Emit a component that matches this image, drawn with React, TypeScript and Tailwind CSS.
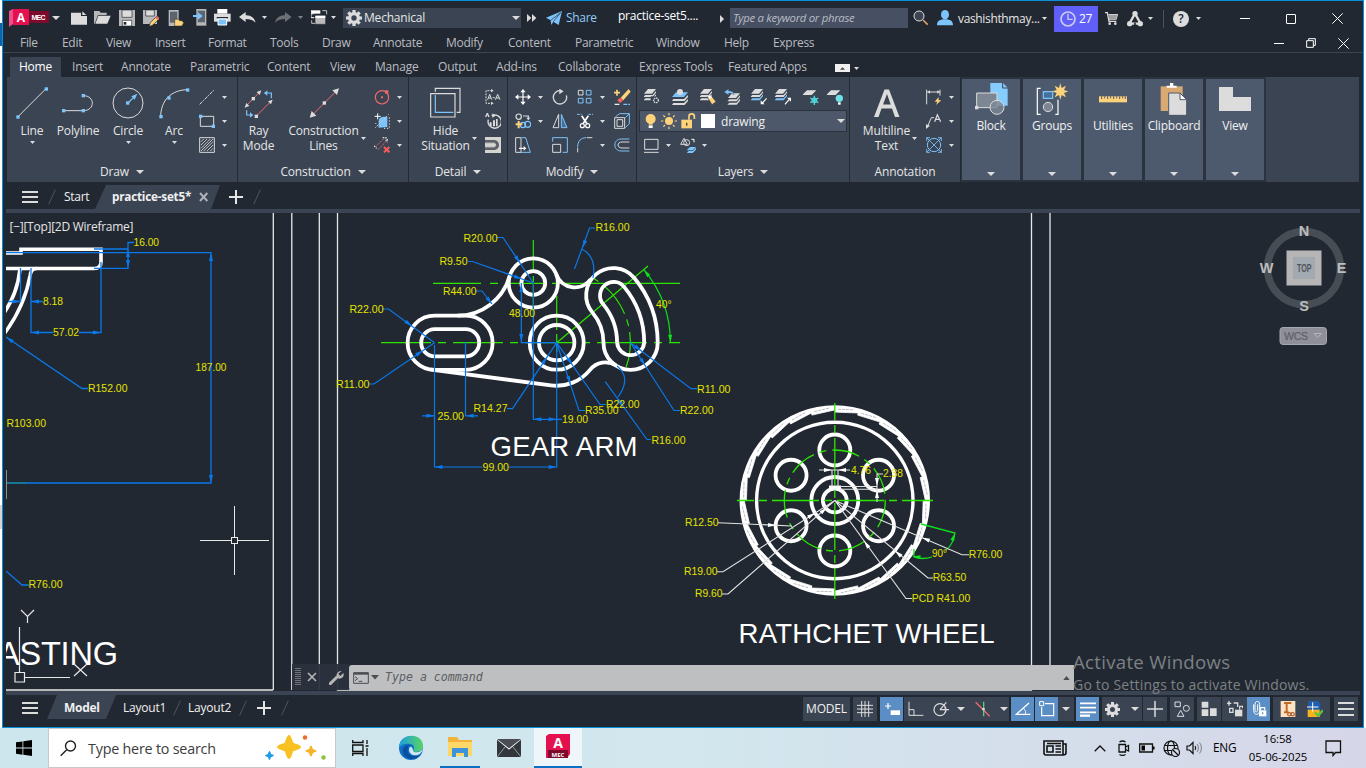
import React from "react";

type Kids = { children?: React.ReactNode };

const BLUE = "#7cc4fb";
const RED = "#ef6a6a";
const GOLD = "#fdd27a";

/* Icons are drawn on a grid of three units per pixel. */
function Ic({ w = 16, h, children, className = "" }: { w?: number; h?: number; className?: string } & Kids) {
  const hh = h ?? w;
  return (
    <svg width={w} height={hh} viewBox={`0 0 ${w * 3} ${hh * 3}`} fill="none" stroke="#dcdcdc" strokeWidth="3.6" className={"shrink-0 " + className}>
      {children}
    </svg>
  );
}

function Caret({ big = false, className = "" }: { big?: boolean; className?: string }) {
  return (
    <svg width={big ? 8 : 5} height={big ? 4 : 3} viewBox="0 0 10 5" preserveAspectRatio="none" fill="#dcdcdc" className={"shrink-0 " + className}>
      <path d="M0 0h10L5 5z" />
    </svg>
  );
}

function Cell({ className, children }: { className: string } & Kids) {
  return <div className={"flex h-full shrink-0 items-center whitespace-nowrap " + className}>{children}</div>;
}

const Gear = ({ s = 16, c = "#dcdcdc" }: { s?: number; c?: string }) => (
  <svg width={s} height={s} viewBox="-12 -12 24 24" className="shrink-0">
    <circle r="6.5" fill="none" stroke={c} strokeWidth="5" />
    {[0, 45, 90, 135, 180, 225, 270, 315].map((a) => (
      <rect key={a} x="-2.4" y="-12" width="4.8" height="5" fill={c} transform={`rotate(${a})`} />
    ))}
  </svg>
);

function TitleBar() {
  return (
    <div className="flex h-[33px] items-center">
      <Cell className="w-[47px] pl-[6px] pt-[3px]">
        <svg width="41" height="20" viewBox="0 0 41 20">
          <path d="M0 2L4 0V15L0 18z" fill="#f0508a" />
          <path d="M4 0H20V16H4z" fill="#e51050" />
          <path d="M20 2H40V14H20z" fill="#7d0a2b" />
          <text x="12" y="12.5" fontSize="12" fontWeight="700" fill="#fff" textAnchor="middle" fontFamily="Open Sans">A</text>
          <text x="22.5" y="11" fontSize="7" fontWeight="700" fill="#fff" textLength="14" fontFamily="Liberation Sans">MEC</text>
        </svg>
      </Cell>
      <Cell className="w-[21px] pl-[2px]"><Caret big /></Cell>
      <Cell className="w-[23px]"><Ic><path d="M0 8H30V18H48V44H0z" fill="#dcdcdc" stroke="none" /><path d="M34 4L46 15H34z" fill="#dcdcdc" stroke="none" /></Ic></Cell>
      <Cell className="w-[25px]"><Ic w={17}><path d="M0 6H16L20 11H38V18H12L2 44H0z" fill="#b9b9b9" stroke="none" /><path d="M13 20H50L40 44H4z" fill="#dcdcdc" stroke="none" /></Ic></Cell>
      <Cell className="w-[24px]"><Ic><path d="M0 0H48V48H0z" fill="#b9b9b9" stroke="none" /><path d="M9 0H39V22H9z" fill="#dcdcdc" stroke="#222831" strokeWidth="2" /><path d="M10 31H38V48H10z" fill="#fff" stroke="#222831" strokeWidth="2" /><path d="M14 36H22V44H14z" fill="#222831" stroke="none" /></Ic></Cell>
      <Cell className="w-[25px]"><Ic><path d="M0 0H42V42H0z" fill="#b9b9b9" stroke="none" /><path d="M8 0H34V18H8z" fill="#dcdcdc" stroke="#222831" strokeWidth="2" /><path d="M18 50L22 38L42 18L50 26L28 46z" fill={GOLD} stroke="#222831" strokeWidth="2" /><path d="M37 23L42 18L50 25L44 30z" fill={RED} stroke="none" /></Ic></Cell>
      <Cell className="w-[25px]"><Ic><path d="M2 0H32V48H2z" fill="#b9b9b9" stroke="none" /><path d="M6 5H28V38H6z" fill="#5c6470" stroke="none" /><path d="M20 28H32L35 32H44V36H48L42 48H20z" fill={GOLD} stroke="#222831" strokeWidth="1.5" /></Ic></Cell>
      <Cell className="w-[21px]"><Ic w={14} h={17}><path d="M10 0H40V50H10z" fill="#b9b9b9" stroke="none" /><path d="M14 5H36V40H14z" fill="#5c6470" stroke="none" /><path d="M0 18H14V9L29 21L14 33V24H0z" fill={BLUE} stroke="none" /></Ic></Cell>
      <Cell className="w-[25px]"><Ic w={17}><path d="M10 0H40V14H10z" fill="#fff" stroke="none" /><path d="M0 14H50V38H0z" fill="#dcdcdc" stroke="none" /><path d="M8 24H42V28H8z" fill="#222831" stroke="none" /><path d="M12 30H38V48H12z" fill={BLUE} stroke="#fff" strokeWidth="3" /></Ic></Cell>
      <Cell className="w-[23px]"><Ic w={17} h={12}><path d="M0 15L20 0V10C36 9 46 18 50 32C40 23 32 21 20 21V30z" fill="#dcdcdc" stroke="none" /></Ic></Cell>
      <Cell className="w-[13px]"><Caret /></Cell>
      <Cell className="w-[23px]"><Ic w={17} h={12} className="opacity-40"><path d="M50 15L30 0V10C14 9 4 18 0 32C10 23 18 21 30 21V30z" fill="#dcdcdc" stroke="none" /></Ic></Cell>
      <Cell className="w-[13px]"><Caret className="opacity-50" /></Cell>
      <Cell className="w-[20px]"><Ic w={17}><path d="M0 4H28V14H0z" fill="#fff" stroke="none" /><path d="M0 14H10M0 4V26H10" /><path d="M12 20H44V46H12z" fill="#b9b9b9" stroke="#222831" strokeWidth="2" /><path d="M13 20H43V27H13z" fill="#fff" stroke="none" /><path d="M34 5H47V16M2 34V43H12" strokeWidth="2.5" /></Ic></Cell>
      <Cell className="w-[12px]"><Caret /></Cell>
      <div className="mt-[1px] flex h-[20px] w-[178px] shrink-0 items-center bg-[#3b4453] pl-[3px] pr-[1px] text-[12px] text-[#e6e6e6]">
        <Gear />
        <span className="ml-[2px] flex-1 text-[12px] tracking-[-0.2px]">Mechanical</span>
        <Caret big />
      </div>
      <Cell className="w-[25px] pl-[6px]"><Ic w={10} h={8}><path d="M0 0L13 12L0 24zM15 0L28 12L15 24z" fill="#dcdcdc" stroke="none" /></Ic></Cell>
      <Cell className="w-[20px]"><Ic w={16} h={14}><path d="M0 20L48 0L38 42L22 32L16 42L14 28z" fill={BLUE} stroke="none" /><path d="M14 28L44 5L22 32" stroke="#222831" strokeWidth="2" /></Ic></Cell>
      <Cell className="w-[52px] pt-[1px] text-[12px] tracking-[-0.3px] text-[#8fcdfa]">Share</Cell>
      <Cell className="w-[102px] pb-[3px] text-[12px] tracking-[-0.25px] text-white">practice-set5....</Cell>
      <Cell className="w-[10px] pt-[2px]"><Ic w={4} h={8}><path d="M0 0L12 12L0 24z" fill="#dcdcdc" stroke="none" /></Ic></Cell>
      <div className="mt-[1px] flex h-[20px] w-[178px] shrink-0 items-center bg-[#474f63] pl-[3px] text-[11.3px] italic tracking-[-0.28px] text-[#b8bcc4]">Type a keyword or phrase</div>
      <Cell className="w-[28px] pl-[5px]"><Ic><circle cx="18" cy="18" r="15" fill="#3b4453" strokeWidth="3" /><path d="M30 30L44 44" stroke="#d9a066" strokeWidth="5" /></Ic></Cell>
      <Cell className="w-[22px] pl-[1px]"><Ic><ellipse cx="24" cy="14" rx="12" ry="14" fill={BLUE} stroke="none" /><path d="M0 46C0 32 8 31 18 28H30C40 31 48 32 48 46z" fill={BLUE} stroke="none" /></Ic></Cell>
      <Cell className="w-[84px] pt-[3px] text-[12px] tracking-[-0.35px] text-[#e6e6e6]">vashishthmay...</Cell>
      <Cell className="w-[12px] pt-[2px]"><Caret /></Cell>
      <div className="mt-[3px] flex h-[26px] w-[44px] shrink-0 items-center gap-[3px] bg-[#6060f8] pl-[6px] text-[12px] tracking-[-0.3px] text-white">
        <Ic><circle cx="24" cy="24" r="21" stroke="#c9c9f6" strokeWidth="5" /><path d="M24 8V25H38" stroke="#c9c9f6" strokeWidth="4" /></Ic>
        27
      </div>
      <Cell className="w-[29px] pl-[7px] pt-[3px]"><Ic w={13} h={14}><path d="M0 2H7L12 28H34M11 8H37L33 21H12" strokeWidth="4" /><path d="M11 8H37L33 21H12z" fill="#a0a0a0" stroke="none" /><circle cx="14" cy="35" r="4" fill="#dcdcdc" stroke="none" /><circle cx="31" cy="35" r="4" fill="#dcdcdc" stroke="none" /></Ic></Cell>
      <Cell className="w-[21px] pt-[2px]"><Ic><path d="M24 8L7 38H41z" strokeWidth="7" /><circle cx="24" cy="8" r="8" fill="#dcdcdc" stroke="none" /><circle cx="8" cy="38" r="8" fill="#dcdcdc" stroke="none" /><circle cx="40" cy="38" r="8" fill="#dcdcdc" stroke="none" /><path d="M24 35V48" stroke="#222831" strokeWidth="5" /></Ic></Cell>
      <Cell className="w-[15px] pt-[2px]"><Caret /></Cell>
      <div className="mr-[9px] mt-[2px] h-[18px] w-px shrink-0 bg-[#4a5260]" />
      <div className="mr-[7px] mt-[2px] flex h-[16px] w-[16px] shrink-0 items-center justify-center rounded-full bg-[#dcdcdc] text-[12px] font-semibold text-[#222831]">?</div>
      <Cell className="w-[44px] pt-[2px]"><Caret /></Cell>
      <Cell className="w-[46px] pt-[2px]"><div className="h-px w-[10px] bg-white" /></Cell>
      <Cell className="w-[46px] pt-[2px]"><div className="h-[10px] w-[10px] rounded-[1px] border border-white" /></Cell>
      <Cell className="w-[12px] pt-[2px]"><Ic w={11}><path d="M1 1L32 32M32 1L1 32" stroke="#fff" strokeWidth="3" /></Ic></Cell>
    </div>
  );
}

const MENUS: [string, string][] = [
  ["File", "w-[42px]"], ["Edit", "w-[44px]"], ["View", "w-[49px]"], ["Insert", "w-[53px]"], ["Format", "w-[62px]"], ["Tools", "w-[52px]"], ["Draw", "w-[51px]"],
  ["Annotate", "w-[73px]"], ["Modify", "w-[62px]"], ["Content", "w-[67px]"], ["Parametric", "w-[81px]"], ["Window", "w-[68px]"], ["Help", "w-[49px]"], ["Express", "w-[48px]"],
];
const TABS: [string, string][] = [
  ["Insert", "w-[49px]"], ["Annotate", "w-[69px]"], ["Parametric", "w-[77px]"], ["Content", "w-[63px]"], ["View", "w-[45px]"], ["Manage", "w-[63px]"], ["Output", "w-[58px]"],
  ["Add-ins", "w-[62px]"], ["Collaborate", "w-[81px]"], ["Express Tools", "w-[89px]"], ["Featured Apps", "w-[107px]"],
];

function Menus() {
  return (
    <>
      <div className="flex h-[18px] items-center pl-[17px] text-[12px] tracking-[-0.3px] text-[#b9bcc2]">
        {MENUS.map(([t, w]) => <Cell key={t} className={w}>{t}</Cell>)}
        <div className="flex-1" />
        <Cell className="w-[32px]"><div className="h-px w-[10px] bg-white" /></Cell>
        <Cell className="w-[32px]"><Ic w={10}><path d="M2 8H22V28H2zM8 7V2H28V22H23" stroke="#fff" strokeWidth="3" /></Ic></Cell>
        <Cell className="w-[25px]"><Ic w={11}><path d="M1 1L32 32M32 1L1 32" stroke="#fff" strokeWidth="3" /></Ic></Cell>
      </div>
      <div className="h-px bg-[#3b4453]" />
      <div className="flex h-[24px] items-end pl-[7px] text-[12px] tracking-[-0.2px] text-[#b9bcc2]">
        <div className="flex h-[20px] w-[51px] items-center justify-center bg-[#3b4453] text-white">Home</div>
        <div className="flex h-[20px] items-center pl-[11px]">
          {TABS.map(([t, w]) => <Cell key={t} className={w}>{t}</Cell>)}
          <div className="mt-[2px] flex h-[8px] w-[15px] items-center justify-center bg-[#f0f0f0]"><svg width="5" height="3" viewBox="0 0 10 5"><path d="M0 5L5 0L10 5z" fill="#444" /></svg></div>
          <Caret className="ml-[4px] mt-[2px]" />
        </div>
      </div>
    </>
  );
}

function Panel({ w, title, caret = true, children }: { w: string; title: string; caret?: boolean } & Kids) {
  return (
    <div className={"flex h-[105px] shrink-0 flex-col border-r border-[#232a34] " + w}>
      <div className="flex h-[84px]">{children}</div>
      <div className="flex h-[21px] items-center justify-center gap-[7px] text-[12px] tracking-[-0.15px] text-[#e6e6e6]">
        {title}{caret && <Caret big />}
      </div>
    </div>
  );
}

function Big({ w, label, caret = false, side = false, children }: { w: string; label: string[]; caret?: boolean; side?: boolean } & Kids) {
  return (
    <div className={"flex shrink-0 flex-col items-center pt-[10px] text-[12px] leading-[15px] tracking-[-0.15px] text-[#e6e6e6] " + w}>
      <div className="flex h-[36px] items-start">{children}</div>
      <div className="relative whitespace-nowrap text-center">
        {label.map((l) => <div key={l}>{l}</div>)}
        {side && <Caret className="absolute -right-[7px] top-[14px]" />}
      </div>
      {caret && <Caret className="mt-[3px]" />}
    </div>
  );
}

function Small({ caret = false, gap = "w-[8px]", children }: { caret?: boolean; gap?: string } & Kids) {
  return <div className="flex h-[24px] items-center">{children}{caret && <><span className={gap} /><Caret /></>}</div>;
}

const Dot = ({ x, y, c = BLUE }: { x: number; y: number; c?: string }) => <rect x={x - 5} y={y - 5} width="10" height="10" fill={c} stroke="none" />;
const Layers3 = ({ b = "#dcdcdc" }: { b?: string }) => (
  <>
    <path d="M12 0H36L24 14H0z" fill="#dcdcdc" stroke="none" />
    <path d="M4 18H26L36 6V11L26 24H-2z" fill="#dcdcdc" stroke="none" />
    <path d="M4 28H26L36 16V22L26 34H-2z" fill={b} stroke="none" />
  </>
);

function Ribbon() {
  return (
    <div className="ml-[4px] mr-[4px] flex h-[105px] bg-[#3b4453]">
      <Panel w="w-[231px]" title="Draw">
        <div className="w-[2px]" />
        <Big w="w-[46px]" label={["Line"]} caret><Ic w={32}><path d="M4 91L91 4" strokeWidth="3" /><Dot x={6} y={90} /><Dot x={91} y={6} /></Ic></Big>
        <Big w="w-[46px]" label={["Polyline"]}><Ic w={32}><path d="M4 71H64M64 26C100 26 100 71 64 71" strokeWidth="3" /><Dot x={5} y={71} /><Dot x={64} y={71} /><Dot x={64} y={26} /></Ic></Big>
        <Big w="w-[54px]" label={["Circle"]} caret><Ic w={32}><circle cx="48" cy="48" r="45" strokeWidth="3" /><path d="M48 48L68 28" stroke={BLUE} /><path d="M76 20L58 28L68 38z" fill={BLUE} stroke="none" /><Dot x={47} y={48} /></Ic></Big>
        <Big w="w-[38px]" label={["Arc"]} caret><Ic w={32}><path d="M8 90C8 40 40 8 90 8" strokeWidth="3" /><Dot x={9} y={89} /><Dot x={33} y={33} /><Dot x={89} y={9} /></Ic></Big>
        <div className="pl-[6px] pt-[8px]">
          <Small caret gap="w-[7px]"><Ic><path d="M2 46L46 2" strokeDasharray="12 3 3 3" strokeWidth="3" /></Ic></Small>
          <Small caret gap="w-[7px]"><Ic><path d="M4 10H44V40H4z" strokeWidth="3" /><Dot x={5} y={10} /><Dot x={43} y={40} /></Ic></Small>
          <Small caret gap="w-[7px]"><Ic><path d="M2 2H46V46H2z" strokeWidth="3" /><path d="M6 14L14 6M6 24L24 6M6 34L34 6M6 42L42 6M14 42L42 14M24 42L42 24M34 42L42 34" strokeWidth="2.6" /></Ic></Small>
        </div>
      </Panel>
      <Panel w="w-[171px]" title="Construction">
        <Big w="w-[41px]" label={["Ray", "Mode"]}><Ic w={30} h={32}><path d="M8 55L44 18M40 84L78 46" stroke={RED} strokeWidth="3" /><path d="M52 10L38 15L47 24zM2 62L16 57L7 48zM86 38L72 43L81 52z" fill="#dcdcdc" stroke="none" /><Dot x={28} y={35} c="#dcdcdc" /><Dot x={37} y={88} c="#dcdcdc" /><path d="M82 34V18H62M8 70V84H24" stroke={BLUE} /><path d="M60 18L70 10V26zM28 84L18 76V92z" fill={BLUE} stroke="none" /></Ic></Big>
        <Big w="w-[89px]" label={["Construction", "Lines"]} side><Ic w={30} h={32}><path d="M10 84L82 12" stroke={RED} strokeWidth="3" /><path d="M90 4L70 10L84 24zM2 92L8 72L22 86z" fill="#dcdcdc" stroke="none" /><Dot x={46} y={48} c="#dcdcdc" /></Ic></Big>
        <div className="pl-[6px] pt-[8px]">
          <Small caret gap="w-[7px]"><Ic><circle cx="24" cy="25" r="20" stroke={RED} /><Dot x={38} y={9} c={RED} /><rect x="21" y="22" width="6" height="6" fill={RED} stroke="none" /></Ic></Small>
          <Small caret gap="w-[7px]"><Ic><path d="M14 44V24C14 14 24 10 40 12V42z" fill={BLUE} stroke="none" /><path d="M2 10H20M11 1V19" stroke="#fff" strokeWidth="3" /><path d="M4 44L44 4M4 30L16 44M30 46H46V10" strokeDasharray="4 5" strokeWidth="3" /></Ic></Small>
          <Small caret gap="w-[7px]"><Ic><path d="M4 30L30 4M12 38L40 10" stroke={RED} strokeWidth="3" strokeDasharray="6 4" /><path d="M0 26L8 34M26 2H36V12M40 6V16" strokeDasharray="5 3" /><path d="M30 30L46 46M46 30L30 46" stroke="#ff5a5a" strokeWidth="6" /></Ic></Small>
        </div>
      </Panel>
      <Panel w="w-[99px]" title="Detail">
        <Big w="w-[73px]" label={["Hide", "Situation"]} side><Ic w={31} h={32}><path d="M2 20H75V90H2zM16 14V4H90V76H80" strokeWidth="3.5" /><path d="M16 24V76H70" stroke={BLUE} /></Ic></Big>
        <div className="pl-[3px] pt-[8px]">
          <Small><Ic><path d="M22 5H3V43H22" strokeDasharray="6 3" strokeWidth="3" /><path d="M18 0L26 5L18 10zM18 38L26 43L18 48z" fill="#dcdcdc" stroke="none" /><path d="M8 32L14 16L20 32M10 27H18M23 26H29M31 32L38 16L45 32M33 27H43" strokeWidth="3" /></Ic></Small>
          <Small><Ic><path d="M2 12L7 1L12 12M20 8A20 20 0 1 1 10 20" strokeWidth="4" /><path d="M22 1V14L32 8z" fill="#dcdcdc" stroke="none" /><path d="M14 28H20V40H14zM24 22H30V40H24zM33 18H38V40H33z" fill="#dcdcdc" stroke="none" /></Ic></Small>
          <Small><Ic><path d="M0 0H48V48H0z" fill="#d5d5d0" stroke="none" /><path d="M0 14H28C40 14 40 34 28 34H0" stroke="#5b5f66" strokeWidth="10" /><path d="M0 18H26C34 18 34 30 26 30H0" stroke="#e5e5e0" strokeWidth="2" /></Ic></Small>
        </div>
      </Panel>
      <Panel w="w-[129px]" title="Modify">
        <div className="flex pl-[7px] pt-[8px]">
          <div className="w-[37px]">
            <Small caret gap="w-[7px]"><Ic><path d="M24 6V42M6 24H42" stroke="#fff" /><path d="M24 0L32 10H16zM24 48L32 38H16zM0 24L10 16V32zM48 24L38 16V32z" fill="#fff" stroke="none" /></Ic></Small>
            <Small caret gap="w-[7px]"><Ic><circle cx="11" cy="11" r="8" /><path d="M24 9H40V18" /><path d="M34 14H46L40 22z" fill="#dcdcdc" stroke="none" /><circle cx="24" cy="36" r="8" stroke={BLUE} /><circle cx="38" cy="34" r="9" stroke={BLUE} /><path d="M11 24V46M2 34H22" stroke={GOLD} strokeWidth="6" /></Ic></Small>
            <Small><Ic><path d="M2 2H18V46H2z" strokeWidth="3" /><path d="M20 2H32L46 46H18" stroke={BLUE} strokeWidth="3" /><path d="M12 34H30" stroke="#fff" /><path d="M26 27L34 34L26 41z" fill="#fff" stroke="none" /></Ic></Small>
          </div>
          <div className="w-[25px]">
            <Small><Ic><path d="M24 5A20 20 0 1 0 43 19" strokeWidth="4" /><path d="M22 -1L35 7L22 16z" fill="#dcdcdc" stroke="none" /></Ic></Small>
            <Small><Ic><path d="M20 4V44H3z" strokeWidth="3" /><path d="M28 4V44H45z" stroke={BLUE} strokeWidth="3" fill="#44709a" /></Ic></Small>
            <Small><Ic><path d="M2 14V2H46V46H32" stroke={BLUE} strokeWidth="3" /><path d="M2 22H26V46H2z" strokeWidth="3" /></Ic></Small>
          </div>
          <div className="w-[37px]">
            <Small caret gap="w-[7px]"><Ic><path d="M4 4H18V18H4z" strokeWidth="3" /><path d="M28 4H42V18H28zM4 28H18V42H4zM28 28H42V42H28z" stroke={BLUE} strokeWidth="3" /></Ic></Small>
            <Small caret gap="w-[7px]"><Ic><path d="M0 4H14M34 4H48" strokeWidth="3" stroke={BLUE} strokeDasharray="8 3" /><path d="M14 8L30 32M34 8L18 32" stroke="#fff" strokeWidth="5" /><circle cx="16" cy="38" r="6" stroke="#fff" /><circle cx="32" cy="38" r="6" stroke="#fff" /></Ic></Small>
            <Small caret gap="w-[7px]"><Ic><path d="M2 46V32M30 2H46" strokeWidth="3" /><path d="M2 30C2 12 12 2 28 2" stroke={BLUE} strokeWidth="3" /></Ic></Small>
          </div>
          <div>
            <Small><Ic w={17}><path d="M20 26L44 0L50 8L28 34z" fill={GOLD} stroke="none" /><path d="M10 34L18 26L28 34L18 42z" fill="#ff6262" stroke="none" /><path d="M9 2V20M0 11H18" stroke={GOLD} strokeWidth="5" /><path d="M2 46H16" stroke="#fff" /><path d="M28 46H48" stroke={BLUE} strokeDasharray="12 3" /></Ic></Small>
            <Small><Ic><path d="M2 14H32V46H2zM9 20H26V40H9z" strokeWidth="3" /><path d="M4 12L16 2H46V32L34 44M34 14L46 2" stroke={BLUE} strokeWidth="3" /></Ic></Small>
            <Small><Ic><path d="M46 6H22C-4 6 -4 42 22 42H46" stroke={BLUE} strokeWidth="3" /><path d="M46 15H24C8 15 8 33 24 33H46" strokeWidth="3" /></Ic></Small>
          </div>
        </div>
      </Panel>
      <Panel w="w-[213px]" title="Layers">
        <div className="pl-[2px] pt-[8px]">
          <div className="flex h-[24px] items-center pl-[5px]">
            <Cell className="w-[28px]"><Ic><Layers3 /><rect x="20" y="22" width="28" height="26" fill="#3b4453" stroke="none" /><circle cx="36" cy="34" r="7" strokeWidth="4" strokeDasharray="4 2" /></Ic></Cell>
            <Cell className="w-[28px]"><Ic><path d="M12 10H48L36 24H0z" fill={BLUE} stroke="none" /><circle cx="24" cy="9" r="9" fill="#dcdcdc" stroke="none" /><path d="M4 30H36L48 18V24L38 36H0zM4 42H36L48 30V36L38 48H0z" fill="#dcdcdc" stroke="none" /></Ic></Cell>
            <Cell className="w-[24px]"><Ic><Layers3 /><path d="M22 24L32 18L48 38L36 47z" fill={GOLD} stroke="#3b4453" strokeWidth="2" /><path d="M24 22L30 18L36 25L29 30z" fill="#fff" stroke="none" /></Ic></Cell>
            <Cell className="w-[27px]"><Ic w={17}><g transform="translate(12 13)"><Layers3 /></g><path d="M0 9L14 0V6C26 6 30 10 30 18C24 13 22 13 14 13V18z" fill={BLUE} stroke="#3b4453" strokeWidth="1" /></Ic></Cell>
            <Cell className="w-[24px]"><Ic><Layers3 b={BLUE} /><path d="M47 28L34 42" stroke="#fff" /><path d="M29 46V34L41 46z" fill="#fff" stroke="none" /></Ic></Cell>
            <Cell className="w-[28px]"><Ic><Layers3 b={BLUE} /><path d="M30 46L42 32" stroke="#fff" /><path d="M48 26V38L36 26z" fill="#fff" stroke="none" /></Ic></Cell>
            <Cell className="w-[24px]"><Ic><path d="M12 4H40L26 18H-2z" fill="#dcdcdc" stroke="none" /><path d="M34 20V48M22 27L46 41M22 41L46 27" stroke="#4fd4dc" strokeWidth="4" /><circle cx="34" cy="34" r="7" stroke="#4fd4dc" /></Ic></Cell>
            <Cell className="w-[16px]"><Ic><path d="M12 4H40L26 18H-2z" fill="#dcdcdc" stroke="none" /><circle cx="37" cy="28" r="11" fill="#6fe0e6" stroke="none" /><path d="M33 40H41V47H33z" fill="#fff" stroke="none" /></Ic></Cell>
          </div>
          <div className="my-[1px] flex h-[22px] w-[208px] items-center border border-[#2b323d] bg-[#4d586b] pl-[5px] pr-[1px] text-[12px] text-[#f0f0f0]">
            <Ic w={12} h={15}><circle cx="17" cy="15" r="15" fill={GOLD} stroke="none" /><path d="M11 27H23V32H11z" fill={GOLD} stroke="none" /><path d="M11 34H23V42H11z" fill="#fff" stroke="none" /></Ic>
            <Ic w={16} className="ml-[4px]"><circle cx="24" cy="24" r="12" fill={GOLD} stroke="none" /><path d="M24 0V7M24 41V48M0 24H7M41 24H48M7 7L12 12M36 36L41 41M41 7L36 12M12 36L7 41" stroke={GOLD} /></Ic>
            <Ic w={16} className="ml-[3px]"><path d="M4 20H36V46H4z" fill={GOLD} stroke="none" /><path d="M27 20V10C27 0 43 0 43 10V18" stroke={GOLD} strokeWidth="5" /><path d="M20 29V38" stroke="#4a4030" strokeWidth="4" /></Ic>
            <div className="ml-[5px] h-[14px] w-[14px] bg-white" />
            <span className="ml-[6px] flex-1 pt-[2px] tracking-[-0.2px]">drawing</span>
            <Caret big />
          </div>
          <div className="flex h-[24px] items-center pl-[5px]">
            <Ic w={15}><path d="M2 4H42V34H2zM0 43H44" strokeWidth="3" /></Ic><Caret className="ml-[7px]" />
            <Ic className="ml-[9px]"><path d="M12 4L2 22H22z" strokeWidth="3" /><circle cx="20" cy="17" r="9" strokeWidth="3" /><path d="M34 7H42V16" stroke="#fff" strokeWidth="3" /><path d="M30 30H48L38 40H20zM26 42H38L48 32V38L38 48H20z" fill={BLUE} stroke="none" /></Ic><Caret className="ml-[6px]" />
          </div>
        </div>
      </Panel>
      <Panel w="w-[111px]" title="Annotation" caret={false}>
        <Big w="w-[73px]" label={["Multiline", "Text"]} side><svg width="28" height="32" viewBox="0 0 28 32"><path d="M1 30L11.5 2.5H16L26.5 30H22L19 21.5H8.5L5.5 30zM10 17.5H17.7L14 7z" fill="#dcdcdc" fillRule="evenodd" /></svg></Big>
        <div className="pl-[3px] pt-[8px]">
          <Small caret gap="w-[7px]"><Ic><path d="M2 2V46M42 2V20M4 9H42" strokeWidth="3" /><path d="M4 9L12 4V14zM42 9L34 4V14z" fill="#dcdcdc" stroke="none" /><path d="M38 24L26 38H34L30 48L46 34H38z" fill={GOLD} stroke="none" /></Ic></Small>
          <Small caret gap="w-[7px]"><Ic><path d="M4 42L16 14H24" strokeWidth="3" /><path d="M0 48V34L12 38z" fill="#dcdcdc" stroke="none" /><path d="M26 26L34 5L44 26M29 19H41" /></Ic></Small>
          <Small caret gap="w-[7px]"><Ic><circle cx="24" cy="24" r="20" stroke={BLUE} strokeWidth="3" /><path d="M2 2L46 46M46 2L2 46M2 12V2H12M36 2H46V12M46 36V46H36M12 46H2V36" stroke={BLUE} strokeWidth="2.6" /></Ic></Small>
        </div>
      </Panel>
      <div className="flex bg-[#2b333f]">
        <Closed label="Block"><Ic w={33}><path d="M46 0H84L98 14V68H46z" fill="#86ccff" stroke="none" /><path d="M83 -2V15H99" stroke="#3b4453" strokeWidth="3" /><path d="M5 30H66V74H5z" fill="#7d8794" strokeWidth="3" /><circle cx="66" cy="73" r="21" fill="#7d8794" strokeWidth="3" fillOpacity=".8" /><Dot x={5} y={74} c="#dcdcdc" /></Ic></Closed>
        <Closed label="Groups"><Ic w={32}><path d="M14 16H4V94H14M58 94H66V50" stroke="#fff" /><path d="M22 26H50V46H22z" fill="#44709a" stroke={BLUE} /><circle cx="36" cy="72" r="14" fill="#7d8794" strokeWidth="3" /><path d="M73 0L77 15L90 8L84 21L98 25L84 30L90 43L77 36L73 50L69 36L56 43L62 30L48 25L62 21L56 8L69 15z" fill={GOLD} stroke="none" /></Ic></Closed>
        <Closed label="Utilities"><Ic w={32}><path d="M6 40H90V58H6z" fill={GOLD} stroke="none" /><path d="M14 40V48M23 40V46M32 40V48M41 40V46M50 40V48M59 40V46M68 40V48M77 40V46M85 40V48" stroke="#4d5a6e" strokeWidth="3" /></Ic></Closed>
        <Closed label="Clipboard"><Ic w={32}><path d="M8 10H74V84H8z" fill="#d9a972" stroke="none" /><path d="M26 14V8H36V0H46V8H56V14z" fill="#fff" stroke="none" /><path d="M32 30H66L86 50V97H32z" fill="#dcdcdc" stroke="#4d5a6e" strokeWidth="3" /><path d="M66 30V50H86z" fill="#fff" stroke="#4d5a6e" strokeWidth="3" /></Ic></Closed>
        <Closed label="View"><Ic w={32}><path d="M0 12H42V42H96V84H0z" fill="#dcdcdc" stroke="none" /></Ic></Closed>
      </div>
    </div>
  );
}

function Closed({ label, children }: { label: string } & Kids) {
  return (
    <div className="ml-[1px] mr-[2px] my-[2px] flex w-[58px] flex-col items-center bg-[#4d5a6e] pt-[4px] text-[12px] leading-[15px] tracking-[-0.2px] text-[#f0f0f0]">
      <div className="h-[35px]">{children}</div>
      <div>{label}</div>
      <Caret big className="mb-[4px] mt-auto" />
    </div>
  );
}

const Slash = () => <Ic w={8} h={16}><path d="M22 2L2 46" stroke="#4c5563" strokeWidth="3" /></Ic>;
const Burger = ({ className = "" }: { className?: string }) => (
  <div className={"flex h-[12px] w-[16px] flex-col justify-between " + className}><i className="h-[2px] bg-[#dcdcdc]" /><i className="h-[2px] bg-[#dcdcdc]" /><i className="h-[2px] bg-[#dcdcdc]" /></div>
);
const Plus = () => <Ic w={14}><path d="M21 0V42M0 21H42" stroke="#e6e6e6" strokeWidth="6" /></Ic>;

function FileTabs() {
  return (
    <>
      <div className="flex h-[27px] items-center pt-[3px] text-[12px] tracking-[-0.15px] text-[#f0f0f0]">
        <Cell className="w-[45px] pl-[19px]"><Burger /></Cell>
        <Cell className="w-[16px]"><Slash /></Cell>
        <Cell className="w-[31px] tracking-[-0.3px]">Start</Cell>
        <div className="flex h-full w-[125px] items-center bg-[#3b4453] pl-[17px] [clip-path:polygon(11px_0,100%_0,calc(100%-9px)_100%,0_100%)]">
          <b className="w-[87px] text-[11.7px] font-bold tracking-[-0.2px]">practice-set5*</b>
          <Ic w={10}><path d="M3 3L25 27M25 3L3 27" stroke="#aeb2b8" strokeWidth="6" /></Ic>
        </div>
        <Cell className="w-[33px] pl-[9px]"><Plus /></Cell>
        <Slash />
      </div>
      <div className="ml-[3px] mr-[3px] h-[4px] bg-[#3b4453]" />
    </>
  );
}

/* ---------- drawing area ---------- */
const DIM = "#0a78ea";
const GREEN = "#2ae600";

function Arr({ x, y, a, c = DIM }: { x: number; y: number; a: number; c?: string }) {
  return <path d="M0 0L-8 -2V2z" fill={c} stroke="none" transform={`translate(${x} ${y}) rotate(${a})`} />;
}
const LABELS: [string, number, number, number][] = [
  ["16.00", 133.5, 246.5, 25.5], ["8.18", 43, 305.5, 20], ["57.02", 53, 336.5, 26], ["187.00", 195.5, 371.5, 31], ["R152.00", 88, 392.5, 39.5], ["R103.00", 6.5, 427.5, 39.5], ["R76.00", 28.5, 588.5, 34],
  ["R20.00", 463.5, 242, 34], ["R9.50", 439.5, 265.5, 28], ["R44.00", 443, 295, 33.5], ["R22.00", 349.5, 313, 34], ["R11.00", 336, 388, 33.5], ["48.00", 509, 317, 26], ["25.00", 437.5, 420, 26.5],
  ["99.00", 482.5, 471, 26.5], ["19.00", 562, 423.3, 26], ["R14.27", 473.5, 412.7, 34], ["R35.00", 585, 414.7, 33.5], ["R22.00", 606, 408.7, 33.5], ["R16.00", 651.5, 444, 34], ["R22.00", 680, 414.7, 33.5],
  ["R11.00", 697, 392.8, 33.5], ["R16.00", 595.5, 231.7, 34], ["40°", 656, 308, 15.5], ["R12.50", 685, 526.7, 33.5], ["R19.00", 684, 575.7, 33.5], ["R9.60", 695, 597.7, 27.5], ["R76.00", 968.7, 558.7, 33.5],
  ["R63.50", 932.7, 581.7, 33.5], ["PCD R41.00", 911.7, 602.7, 58.5], ["4.76", 851, 474, 20], ["2.38", 883, 477.7, 20], ["90°", 932, 557.7, 15],
];
const CX = 834.8;
const CY = 500.5;
const polar = (r: number, deg: number) => `${CX + r * Math.sin((deg * Math.PI) / 180)} ${CY - r * Math.cos((deg * Math.PI) / 180)}`;

function Drawing() {
  return (
    <svg width="1357" height="478" viewBox="6 213 1357 478" className="block" fill="none" fontFamily="Liberation Sans, sans-serif">
      <g stroke="#e8e8e8" strokeWidth="1.3">
        <path d="M273.3 213V690M291.8 213V690M319.3 213V690M337.5 213V690H1031.5V213M1050 213V690" />
        <path d="M6 690H273" />
      </g>

      {/* casting */}
      <g stroke="#fff" strokeWidth="3.6">
        <path d="M6 253H21V249.3H101V262Q101 268.5 94 268.5H6" />
        <path d="M20 269C18 287 13 299 4 313M37 268.5Q31 268 30 276C26 298 16 318 4 334" />
      </g>
      <g stroke={DIM} strokeWidth="1.3">
        <path d="M6 252.7H211V483H6M94 249H128M94 268.3H128V242.5H134M8 301.5H20.5V268M31 268V332.5H53M31 301.5H43M79 332.5H101V262M6 337L82 388.5H88M6 571L22 585H29" />
        <path d="M6 483H26" stroke="#1b8088" />
      </g>
      <Arr x={211} y={253} a={-90} /><Arr x={211} y={483} a={90} /><Arr x={128} y={249} a={-90} /><Arr x={128} y={268} a={90} />
      <Arr x={20.5} y={301.5} a={0} /><Arr x={31} y={301.5} a={180} /><Arr x={31} y={332.5} a={180} /><Arr x={101} y={332.5} a={0} /><Arr x={6} y={337} a={215} />
      <path d="M6.5 470V499" stroke="#8a8f96" />

      {/* gear arm */}
      <g stroke={GREEN} strokeWidth="1.2">
        <path d="M433 283.3H481M490 283.3H498M506 283.3H546M552 283.3H680" />
        <path d="M533.3 240V272M533.3 276V282" />
        <path d="M381 342.7H680" strokeDasharray="50 7 8 7" />
        <path d="M556.7 296V330M556.7 334V352" />
        <path d="M556.7 342.7L648 266" />
        <path d="M626 367.5A73.9 73.9 0 0 0 594 278.8" strokeDasharray="36 6 7 6" />
        <path d="M670.4 342.7A113.7 113.7 0 0 0 643.8 269.6" stroke="#0de01c" />
      </g>
      <Arr x={670.4} y={342.7} a={88} c="#0de01c" /><Arr x={643.8} y={269.6} a={-128} c="#0de01c" />
      <g stroke="#fff" strokeWidth="3.8">
        <circle cx="533.3" cy="283" r="24.6" /><circle cx="533.3" cy="283" r="11.9" />
        <circle cx="556.7" cy="342.7" r="27" /><circle cx="556.7" cy="342.7" r="17.7" />
        <rect x="407.6" y="315.6" width="85" height="54.2" rx="27.1" />
        <rect x="421.2" y="329.1" width="58" height="27.2" rx="13.6" />
        <path d="M644.2 342.7A87.5 87.5 0 0 0 623.7 286.4A13.6 13.6 0 0 0 602.9 303.9A60.4 60.4 0 0 1 617.1 342.7A13.6 13.6 0 0 0 644.2 342.7z" />
        <path d="M657.7 342.7A101 101 0 0 0 634.1 277.8A27.1 27.1 0 0 0 592.5 312.6A46.8 46.8 0 0 1 603.5 342.7A27.1 27.1 0 0 0 657.7 342.7z" />
        <path d="M556.3 274.4A19.7 19.7 0 0 0 590.8 279.2" />
        <path d="M457.5 315.6A54.2 54.2 0 0 0 509.6 276.3" />
        <path d="M430.9 369.6L551 385.4A43.1 43.1 0 0 0 590.2 369.6A19.7 19.7 0 0 1 615.9 365.3" />
      </g>
      <g stroke={DIM} strokeWidth="1.2">
        <path d="M497 237.5H503L533.3 283M468 261.5H472.5L533.3 283M476 291H482L492 304M383 309H388.5L434.5 342.7M369 384H374L434.5 342.7" />
        <path d="M521.3 283V342.7H556.7V467H509M533.3 283V419.3H562M434.5 345V467H482M465.5 342V416M422 415.8H434.5M465.5 415.8H478" />
        <path d="M507 408.7H512.5L556.7 342.7L579 410.5H585M606 404.5H600L556.7 342.7M651 439.5H647L605.3 381.7M680 410.5H674L630.5 342.7L691 388.7H697M595 228H589.5L574.5 269" />
        <path d="M582 249Q597 257 593 278M617 366Q632 378 618 397" />
        <path d="M533.3 283V315" stroke="#1b8088" />
      </g>
      <Arr x={520} y={263} a={57} /><Arr x={522} y={279} a={19} /><Arr x={492} y={304} a={52} /><Arr x={412} y={326} a={36} /><Arr x={423} y={350.5} a={-34} />
      <Arr x={521.3} y={284} a={-90} /><Arr x={521.3} y={342} a={90} /><Arr x={434.5} y={415.8} a={0} /><Arr x={465.5} y={415.8} a={180} />
      <Arr x={434.5} y={467} a={180} /><Arr x={556.7} y={467} a={0} /><Arr x={533.3} y={419.3} a={180} /><Arr x={556.7} y={419.3} a={0} />
      <Arr x={547} y={357} a={-56} /><Arr x={570.5} y={384} a={72} /><Arr x={572.5} y={365} a={55} /><Arr x={617} y={397.5} a={234} />
      <Arr x={645.3} y={365.7} a={57} /><Arr x={641.5} y={351} a={37} /><Arr x={582.5} y={248} a={110} />

      {/* ratchet wheel */}
      <g stroke="#fff">
        <circle cx={CX} cy={CY} r="93" strokeWidth="4.4" />
        {Array.from({ length: 24 }, (_, k) => (
          <path key={k} d={`M${polar(93.5, k * 15)}L${polar(88.4, k * 15)}L${polar(90.6, k * 15 + 15)}L${polar(93.5, k * 15 + 15)}z`} fill="#fff" strokeWidth="0.8" />
        ))}
        {Array.from({ length: 24 }, (_, k) => (
          <path key={k} d={`M${polar(91.2, k * 15 + 2)}L${polar(92.8, k * 15 + 12)}`} stroke="#9a9fa6" strokeWidth=".7" strokeDasharray="3 1" />
        ))}
        <circle cx={CX} cy={CY} r="78.2" strokeWidth="3.4" />
        <circle cx={CX} cy={CY} r="23.5" strokeWidth="3.8" />
        <circle cx={CX} cy={CY} r="11.9" strokeWidth="3.8" />
        {[0, 60, 120, 180, 240, 300].map((a) => {
          const [x, y] = polar(50.5, a).split(" ");
          return <circle key={a} cx={x} cy={y} r="15.5" strokeWidth="3.8" />;
        })}
        <path d="M830.5 490V487H839.5V490" strokeWidth="3" />
      </g>
      <g stroke={GREEN} strokeWidth="1.3">
        <path d="M737 500.5H933" strokeDasharray="47 5 8 5" strokeDashoffset="30" />
        <path d="M834.8 403V599" strokeDasharray="47 5 8 5" strokeDashoffset="30" />
        <circle cx={CX} cy={CY} r="50.5" strokeDasharray="28 6 7 6" />
        <path d="M921 524L955 533Q953 545 946 550M932 557Q922 560 914 557V549" stroke="#0de01c" />
      </g>
      <Arr x={955} y={533} a={-70} c="#0de01c" /><Arr x={912.5} y={556.5} a={185} c="#0de01c" />
      <g stroke="#e2e2e2" strokeWidth="1.1">
        <path d="M718 522.7L792 526M717 571.7H723L834.8 500.5L728 594H722M969 554.7H962L834.8 500.5L928 578H933M834.8 500.5L906 598.5H912" />
        <path d="M819 470H850M832 470V487M838 470V487M883 474H877V502M840 486.5H877M840 489.3H877" />
      </g>
      {[[776, 525.3, 3], [815, 513, -32], [827, 507.5, -41], [922, 537.5, 203], [895, 551, 220], [864, 541, 234], [832, 470, 0], [838, 470, 180], [877, 486, 90], [877, 490, -90]].map(([x, y, a], i) => (
        <Arr key={i} x={x} y={y} a={a} c="#fff" />
      ))}

      <g fontSize="11.8" fill="#e3e300">
        {LABELS.map(([t, x, y, w], i) => <text key={i} x={x} y={y - 0.3} textLength={w} lengthAdjust="spacingAndGlyphs">{t}</text>)}
      </g>
      <g fill="#fff">
        <text x="490.5" y="456" fontSize="27.6" textLength="147">GEAR ARM</text>
        <text x="738.5" y="643" fontSize="27.6" textLength="256">RATHCHET WHEEL</text>
        <text x="-2" y="664.7" fontSize="32.5" textLength="120">ASTING</text>
      </g>

      {/* coordinate axes and cursor */}
      <g stroke="#e8e8e8" strokeWidth="1.2">
        <path d="M19.5 627V672M15 672.5H24.5V682H15zM25 677.5H70M21 610L27.5 616.5L34 610M27.5 616.5V623M74 664L87 676M87 664L74 676" />
        <path d="M234.5 506V537M234.5 544V575M200 540.5H231M238 540.5H269M231.5 537.5H237.5V543.5H231.5z" shapeRendering="crispEdges" strokeWidth="1" />
      </g>
      <text x="9.5" y="231" fontSize="12" fill="#e6e6e6" textLength="124" fontFamily="Open Sans, sans-serif">[−][Top][2D Wireframe]</text>

      {/* view cube */}
      <circle cx="1304" cy="268" r="36.5" stroke="#474d55" strokeWidth="7.5" />
      <rect x="1286.5" y="250.5" width="35" height="35" fill="#b5b5b5" />
      <rect x="1293" y="257" width="22" height="22" fill="#a2a9b1" />
      <text x="1297" y="272" fontSize="10" fontWeight="700" fill="#4d535b" textLength="14.5" lengthAdjust="spacingAndGlyphs">TOP</text>
      <g fontSize="14.5" fontWeight="700" fill="#bdbdbd" textAnchor="middle">
        <text x="1304" y="236">N</text><text x="1304" y="311">S</text><text x="1266.5" y="273">W</text><text x="1341.5" y="273">E</text>
      </g>
      <rect x="1280" y="327.5" width="46.5" height="17" rx="3" fill="#8e8f99" stroke="#a5a6af" />
      <text x="1284" y="339.5" fontSize="10.5" fill="#5f606b" stroke="#5f606b" strokeWidth=".2" textLength="24">WCS</text>
      <path d="M1314 333.5H1321.5L1317.7 337.5z" stroke="#b3b4bd" />
    </svg>
  );
}

function Canvas() {
  return (
    <div className="relative ml-[3px] h-[478px]">
      <Drawing />
      <div className="absolute left-[286px] top-[451px] flex h-[26px] w-[57px] items-center bg-[#2b303d]/95 pl-[3px]">
        <Ic w={6} h={18}><path d="M3 0V54M9 0V54M15 0V54" stroke="#b5b5b5" strokeWidth="3" strokeDasharray="3 3" /></Ic>
        <Ic w={10} className="ml-[6px]"><path d="M3 3L27 27M27 3L3 27" stroke="#b5b5b5" strokeWidth="5" /></Ic>
        <Ic w={15} className="ml-[12px]"><path d="M4 41L24 21" stroke="#b5b5b5" strokeWidth="9" strokeLinecap="round" /><path d="M38 3L28 11L34 18L43 9C48 20 37 29 27 25C18 18 24 2 38 3z" fill="#b5b5b5" stroke="none" /></Ic>
      </div>
      <div className="absolute left-[343px] top-[452px] flex h-[25px] w-[725px] items-center rounded-l-[3px] bg-[#bebfc1] pl-[4px] pr-[4px]">
        <Ic w={16} h={12}><path d="M2 2H46V34H2z" stroke="#4a4d52" strokeWidth="3" /><path d="M2 2H46V8H2z" fill="#4a4d52" stroke="none" /><path d="M6 14L14 20L6 26M17 28H28" stroke="#4a4d52" strokeWidth="3" /></Ic>
        <svg width="8" height="5" viewBox="0 0 8 5" className="ml-[2px]"><path d="M0 0H8L4 4.5z" fill="#4a4d52" /></svg>
        <span className="ml-[6px] flex-1 font-['DejaVu_Sans_Mono',monospace] text-[11.6px] italic text-[#5c5e63]">Type a command</span>
        <svg width="7" height="4" viewBox="0 0 8 5"><path d="M0 5L4 0L8 5z" fill="#4a4d52" /></svg>
      </div>
      <div className="absolute left-[1067px] top-[437px] z-10 whitespace-nowrap text-[#7d8186]">
        <div className="text-[18.6px] leading-[24px] tracking-[0.3px]">Activate Windows</div>
        <div className="text-[14px] leading-[21px] tracking-[0.2px]">Go to Settings to activate Windows.</div>
      </div>
    </div>
  );
}

function SB({ className, on = false, children }: { className: string; on?: boolean } & Kids) {
  return <div className={"flex h-[24px] shrink-0 items-center justify-center " + (on ? "bg-[#5b8ec4] " : "bg-[#3b4453] ") + className}>{children}</div>;
}

function StatusBar() {
  return (
    <>
      <div className="ml-[3px] mr-[3px] h-[4px] bg-[#3b4453]" />
      <div className="flex h-[32px] items-start text-[12px] tracking-[-0.2px] text-[#f0f0f0]">
        <div className="flex h-[25px] items-center">
          <Cell className="w-[44px] pl-[19px]"><Burger /></Cell>
          <div className="mb-px flex h-[24px] w-[69px] items-center self-start bg-[#3b4453] pl-[17px] pt-[2px] [clip-path:polygon(10px_0,100%_0,calc(100%-10px)_100%,0_100%)]"><b className="font-bold tracking-[-0.3px]">Model</b></div>
          <Cell className="w-[57px] pl-[7px]">Layout1</Cell>
          <Cell className="w-[15px]"><Slash /></Cell>
          <Cell className="w-[51px]">Layout2</Cell>
          <Cell className="w-[18px]"><Slash /></Cell>
          <Cell className="w-[24px]"><Plus /></Cell>
          <Slash />
        </div>
        <div className="ml-auto mr-[5px] flex pt-[2px]">
          <SB className="w-[47px]">MODEL</SB>
          <SB className="ml-[3px] w-[24px]"><Ic><path d="M14 0V48M24 0V48M35 0V48M0 13H48M0 24H48M0 35H48" strokeWidth="3" /></Ic></SB>
          <SB className="ml-[3px] w-[23px]" on><Ic><path d="M3 15H21M12 6V24" stroke="#fff" /><path d="M20 28H48V42H20z" fill="#fff" stroke="none" /></Ic></SB>
          <SB className="ml-px w-[105px] !justify-start gap-[0px]">
            <Ic className="ml-[4px]"><path d="M3 2V43H46M3 26H18V43" strokeWidth="3" /></Ic>
            <Ic className="ml-[9px]"><circle cx="21" cy="26" r="18" /><path d="M21 26H48M21 26L40 4" /><path d="M34 18C38 24 38 30 34 36" strokeWidth="2" /></Ic>
            <Caret big className="ml-[8px]" />
            <Ic className="ml-[10px]"><path d="M2 4L44 46" stroke={RED} strokeWidth="4" /><path d="M26 2V46" stroke="#5cc88a" strokeWidth="4" /><rect x="22" y="21" width="7" height="7" fill="#dcdcdc" stroke="none" /></Ic>
            <Caret big className="ml-[9px]" />
          </SB>
          <SB className="ml-[2px] w-[23px]" on><Ic><path d="M42 6L4 40H46" stroke="#fff" strokeWidth="4" /><path d="M26 22Q34 30 32 40" stroke="#fff" strokeWidth="2.5" /></Ic></SB>
          <SB className="ml-px w-[23px]" on><Ic><path d="M18 8H44V44H8V18" stroke="#fff" strokeWidth="3.5" /><path d="M2 2H14V14H2z" stroke="#fff" strokeWidth="3" /></Ic></SB>
          <SB className="w-[16px]"><Caret big /></SB>
          <SB className="ml-[2px] w-[23px]" on><Ic><path d="M0 7H48M0 20H28M0 34H48M28 20H48" stroke="#fff" strokeWidth="5" /><path d="M0 44H30" stroke="#fff" strokeWidth="7" /></Ic></SB>
          <SB className="ml-[3px] w-[40px] gap-[11px]"><Gear s={15} /><Caret big /></SB>
          <SB className="ml-px w-[24px]"><Ic><path d="M24 0V48M0 24H48" strokeWidth="4.5" /></Ic></SB>
          <SB className="ml-[3px] w-[24px]"><Ic><path d="M3 3H19V17H3z" strokeWidth="3" /><circle cx="37" cy="22" r="9" strokeWidth="3" /><path d="M20 28L10 46H30z" strokeWidth="3" /></Ic></SB>
          <SB className="ml-[3px] w-[24px]"><Ic><path d="M2 2H22V20H2zM2 25H22V45H2zM27 22H47V45H27z" fill="#dcdcdc" stroke="none" /></Ic></SB>
          <SB className="ml-px w-[25px]"><Ic><path d="M6 0V14M0 7H13M20 6H32V18M8 22H18V34H8z" strokeWidth="4" /><path d="M24 26H46V46H24z" fill="#dcdcdc" stroke="none" /><path d="M38 26V16H47V22" /></Ic></SB>
          <SB className="w-[23px]" on><Ic><path d="M8 10V28C8 44 26 44 26 28V10C26 -2 12 -2 12 10V28C12 34 20 34 20 28V10" stroke="#fff" strokeWidth="3" /><path d="M24 28H46V46H24z" fill="#fff" stroke="none" /><path d="M29 28V20H41V28" stroke="#fff" /><path d="M35 34V40" stroke="#5b8ec4" /></Ic></SB>
          <SB className="ml-[3px] w-[57px] gap-[11px]">
            <Ic><path d="M2 0H46V48H2z" fill="#fbe3c4" stroke="none" /><path d="M12 6H34M12 34H26M20 6V34" stroke="#c46a28" strokeWidth="6" /><circle cx="28" cy="40" r="5" stroke="#b35e2a" /><circle cx="38" cy="40" r="5" stroke="#b35e2a" /></Ic>
            <Ic><path d="M4 0H32L40 8V48H4z" fill="#1d5fae" stroke="none" /><path d="M2 26H38V48H2z" fill="#f7b21f" stroke="none" /><path d="M0 18H34M17 4V32" stroke="#fff" strokeWidth="3" /><path d="M24 34L33 44L48 28" stroke="#5fc23c" strokeWidth="7" /></Ic>
          </SB>
          <SB className="ml-[4px] w-[24px]"><Burger className="!h-[14px]" /></SB>
        </div>
      </div>
    </>
  );
}

function Star({ x, y, r, c }: { x: number; y: number; r: number; c: string }) {
  return <path transform={`translate(${x} ${y}) scale(${r})`} d="M0 -1C.2 -1 .3 -.4 .36 -.36C.4 -.3 1 -.2 1 0C1 .2 .4 .3 .36 .36C.3 .4 .2 1 0 1C-.2 1 -.3 .4 -.36 .36C-.4 .3 -1 .2 -1 0C-1 -.2 -.4 -.3 -.36 -.36C-.3 -.4 -.2 -1 0 -1z" fill={c} />;
}

function Taskbar() {
  return (
    <div className="flex h-[40px] items-center bg-linear-to-r from-[#cde6ee] via-[#d2e7ee] to-[#d6d6e8] pr-[16px] text-black">
      <Cell className="w-[48px] pl-[16px]"><svg width="16" height="16" viewBox="0 0 16 16"><path d="M0 2.3L6.5 1.4V7.6H0zM7.3 1.2L16 0V7.6H7.3zM0 8.4H6.5V14.7L0 13.8zM7.3 8.4H16V16L7.3 14.8z" /></svg></Cell>
      <div className="flex h-[40px] w-[288px] items-center border border-[#c6c8ca] bg-white pl-[11px]">
        <svg width="17" height="17" viewBox="0 0 17 17" fill="none" stroke="#222" strokeWidth="1.4"><circle cx="10.5" cy="6" r="5" /><path d="M6.7 9.8L.7 15.8" /></svg>
        <span className="ml-[11px] w-[177px] whitespace-nowrap pt-[1px] text-[14.3px] tracking-[-0.2px] text-[#3c3c3c]">Type here to search</span>
        <svg width="62" height="28" viewBox="0 0 62 28"><Star x={4.5} y={21.500} r={4.5} c="#1f9ce8" /><Star x={24} y={13} r={12} c="#f8c021" /><Star x={46} y={17} r={5.5} c="#f4b52a" /><circle cx="40" cy="3.5" r="2.2" fill="#ef6830" /><circle cx="58.500" cy="23.500" r="2.2" fill="#8bc53c" /></svg>
      </div>
      <Cell className="w-[62px] pl-[16px]"><svg width="17" height="16" viewBox="0 0 17 16" fill="none" stroke="#111" strokeWidth="1.3"><path d="M.7 0V2.5H11V0M.7 5H11V11.5H.7zM.7 16V13.5H11V16M15 0V4M15 8V16M13.5 6H16.5" /></svg></Cell>
      <Cell className="w-[42px]">
        <svg width="26" height="26" viewBox="0 0 26 26">
          <defs><linearGradient id="edge" x1="0" y1="0" x2="1" y2="0"><stop offset="0" stopColor="#1b9de2" /><stop offset="1" stopColor="#58d463" /></linearGradient></defs>
          <circle cx="13" cy="13" r="12" fill="#0f6fc4" />
          <path d="M1 13C1 -3 25 -3 25 11C25 17 17 18 15 16C17 13 16 9 12 9C6 8 2 11 1 13z" fill="url(#edge)" />
          <path d="M10 13C8 19 14 23 22 20C17 27 3 24 5 14C6 11 10 10 12 9.500C10.500 10.500 10 12 10 13z" fill="#0a4ea0" />
          <path d="M15 16C17 18 23 18 25 13C24 20 18 21 15 20C11 19 10 14 12 12C14 11 15 14 15 16z" fill="#cfe6ee" />
        </svg>
      </Cell>
      <div className="flex h-full w-[40px] items-center justify-center border-b-2 border-[#0b6fc2]">
        <svg width="24" height="22" viewBox="0 0 24 22"><path d="M0 1H9L11 4H24V20H0z" fill="#f2b43a" /><path d="M0 6H24V20H0z" fill="#fdd767" /><path d="M4 12H20V21H16V17H8V21H4z" fill="#3d93d8" /></svg>
      </div>
      <Cell className="w-[54px] justify-center pl-[4px]"><svg width="24" height="20" viewBox="0 0 24 20"><path d="M0 1H24V19H0z" fill="#33363b" /><path d="M0 1L12 11L24 1" stroke="#e8eef2" strokeWidth="1.3" fill="none" /><path d="M0 1H24L12 10z" fill="#4a4e54" /><path d="M0 19L8 9M24 19L16 9" stroke="#cfe6ee" strokeWidth=".6" /></svg></Cell>
      <div className="flex h-full w-[48px] items-center justify-center border-b-2 border-[#0b6fc2] bg-[#eef6f9]">
        <svg width="24" height="26" viewBox="0 0 24 26"><path d="M0 2L3 0H24V20L21 24H0z" fill="#e51050" /><path d="M2 16H22V24H2z" fill="#7d0a2b" /><text x="12" y="14" fontSize="14" fontWeight="700" fill="#fff" textAnchor="middle" fontFamily="Open Sans">A</text><text x="12" y="22.500" fontSize="6" fontWeight="700" fill="#fff" textAnchor="middle">MEC</text></svg>
      </div>
      <div className="flex-1" />
      <Cell className="w-[51px]"><svg width="24" height="16" viewBox="0 0 24 16" fill="none" stroke="#111" strokeWidth="1.6"><path d="M1 1H20V15H3Q1 15 1 13zM20 4H23V13Q23 15 20 15M4 6H10V12H4zM12.500 6H18M12.500 9H18M12.500 12H18M4 3.500H18" /></svg></Cell>
      <Cell className="w-[23px]"><svg width="12" height="7" viewBox="0 0 12 7" fill="none" stroke="#111" strokeWidth="1.3"><path d="M.7 6.300L6 1L11.300 6.300" /></svg></Cell>
      <Cell className="w-[22px]"><svg width="13" height="16" viewBox="0 0 13 16" fill="none" stroke="#111" strokeWidth="1.3"><path d="M2 4.500H8.500V12H2zM8.500 7L11.500 5.500V11L8.500 9.500M2.500 2Q5.500 0 8.500 2M2.500 14.500Q5.500 16.500 8.500 14.500" /></svg></Cell>
      <Cell className="w-[24px]"><svg width="16" height="10" viewBox="0 0 16 10"><path d="M.7 1H13.500V9H.7z" fill="none" stroke="#111" strokeWidth="1.3" /><path d="M2.500 2.500H6V7.500H2.500zM14 3.500H15.500V6.500H14z" /></svg></Cell>
      <Cell className="w-[23px]"><svg width="17" height="17" viewBox="0 0 17 17" fill="none" stroke="#111" strokeWidth="1.2"><circle cx="8" cy="8" r="7" /><ellipse cx="8" cy="8" rx="3.500" ry="7" /><path d="M1 5.500H15M1 10.500H10" /><circle cx="12.500" cy="12.500" r="4" fill="#d6dae9" /><path d="M10 10L15 15" /></svg></Cell>
      <Cell className="w-[27px]"><svg width="17" height="14" viewBox="0 0 17 14" fill="none" stroke="#111" strokeWidth="1.200"><path d="M1 5H3.500L7 1.500V12.500L3.500 9H1zM9 5Q10.500 7 9 9" /><path d="M11 3Q14 7 11 11M13.500 1.500Q17.500 7 13.500 12.500" stroke="#8b8f99" /></svg></Cell>
      <Cell className="w-[34px] text-[11.800px] tracking-[-0.2px]">ENG</Cell>
      <div className="w-[62px] text-center text-[11.400px] leading-[18px] tracking-[-0.1px]"><div className="pr-[1px]">16:58</div><div>05-06-2025</div></div>
      <Cell className="w-[41px] pl-[16px]"><svg width="17" height="17" viewBox="0 0 17 17" fill="none" stroke="#111" strokeWidth="1.300"><path d="M1 1H15.500V12.500H10.500L8 15.500V12.500H1z" /></svg></Cell>
    </div>
  );
}

export default function App() {
  return (
    <div className="h-[768px] w-[1366px] overflow-hidden bg-white font-['Open_Sans','Noto_Sans',sans-serif]">
      <div className="flex h-[728px]">
        <div className="w-[2px] pt-[23px]"><div className="h-[23px] bg-[#0a63b0]" /><div className="mt-[459px] h-[24px] bg-[#d5d5d5]" /></div>
        <div className="h-[728px] w-[1362px] overflow-hidden border border-[#0a90d8] bg-[#222831]">
          <TitleBar />
          <Menus />
          <Ribbon />
          <FileTabs />
          <Canvas />
          <StatusBar />
        </div>
      </div>
      <Taskbar />
    </div>
  );
}
